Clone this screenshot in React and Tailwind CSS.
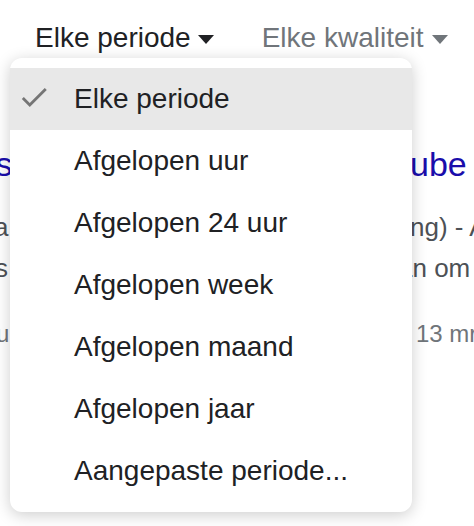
const options = [
  'Elke periode',
  'Afgelopen uur',
  'Afgelopen 24 uur',
  'Afgelopen week',
  'Afgelopen maand',
  'Afgelopen jaar',
  'Aangepaste periode...',
];

function Caret({ className }) {
  return (
    <svg viewBox="0 0 16 9" className={className} fill="currentColor">
      <path d="M0 0h16L8 9z" />
    </svg>
  );
}

function Check() {
  return (
    <svg viewBox="0 0 24 24" className="h-[34px] w-[34px] text-[#757575]" fill="currentColor">
      <path d="M9 16.17L4.83 12l-1.42 1.41L9 19 21 7l-1.41-1.41z" />
    </svg>
  );
}

export default function App() {
  return (
    <div className="relative h-[526px] w-[474px] overflow-hidden bg-white font-['Liberation_Sans',Arial,sans-serif]">
      {/* filter bar */}
      <div className="flex h-[58px] items-start pl-[35px] pt-[24px] text-[28px] leading-[28px]">
        <div className="flex items-center text-[#202124]">
          <span>Elke periode</span>
          <Caret className="ml-[7px] mt-[2px] h-[9px] w-[16px]" />
        </div>
        <div className="ml-[48px] flex items-center text-[#70757a]">
          <span>Elke kwaliteit</span>
          <Caret className="ml-[8px] mt-[2px] h-[9px] w-[16px]" />
        </div>
      </div>

      {/* result behind the menu */}
      <div className="whitespace-nowrap">
        <div className="mt-[89px] flex h-[34px] text-[34px] leading-[34px] text-[#1a0dab]">
          <span className="-ml-[14px] w-[424px] shrink-0">ts</span>
          <span>ube</span>
        </div>
        <div className="mt-[33px] flex h-[26px] text-[26px] leading-[26px] text-[#4d5156]">
          <span className="-ml-[6px] w-[416px] shrink-0">a</span>
          <span>ng) - Alles</span>
        </div>
        <div className="mt-[15px] flex h-[26px] text-[26px] leading-[26px] text-[#4d5156]">
          <span className="-ml-[5px] w-[403px] shrink-0">s</span>
          <span>an om</span>
        </div>
        <div className="mt-[41px] flex h-[24px] text-[24px] leading-[24px] text-[#70757a]">
          <span className="-ml-[4px] w-[420px] shrink-0">ub</span>
          <span>13 mrt</span>
        </div>
      </div>

      {/* dropdown */}
      <div className="absolute left-[10px] top-[58px] w-[402px] rounded-[12px] bg-white py-[10px] shadow-[0_3px_16px_rgba(0,0,0,0.2)]">
        {options.map((label, i) => (
          <div
            key={label}
            className={`flex h-[62px] items-center text-[28px] leading-[28px] text-[#202124] ${i === 0 ? 'bg-[#e8e8e8]' : ''}`}
          >
            <div className="flex w-[64px] pl-[7px] -mt-[4px]">{i === 0 && <Check />}</div>
            <span>{label}</span>
          </div>
        ))}
      </div>
    </div>
  );
}
